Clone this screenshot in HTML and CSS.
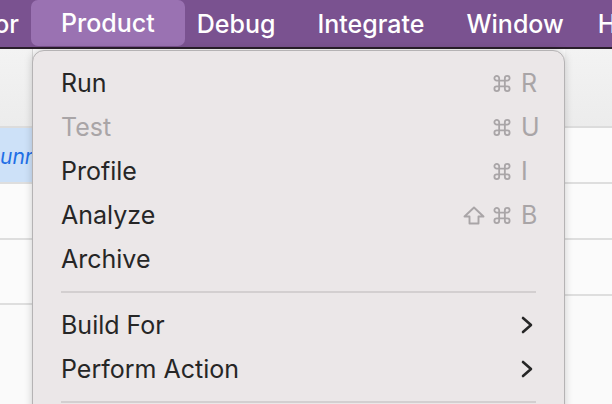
FILE: index.html
```html
<!DOCTYPE html>
<html>
<head>
<meta charset="utf-8">
<link rel="stylesheet" href="styles.css">
</head>
<body>
<div class="menubar">
  <span class="mb-item mb-cut">or</span>
  <span class="mb-item mb-active">Product</span>
  <span class="mb-item">Debug</span>
  <span class="mb-item">Integrate</span>
  <span class="mb-item">Window</span>
  <span class="mb-item mb-last">Help</span>
</div>
<div class="window">
  <div class="pane pane-left">
    <div class="pane-head"></div>
    <div class="row row-sel"><span class="row-text">unning</span></div>
    <div class="row"></div>
    <div class="row row-tall"></div>
  </div>
  <div class="pane pane-mid"></div>
  <div class="pane pane-right">
    <div class="pane-head"></div>
    <div class="row"></div>
    <div class="row"></div>
    <div class="row"></div>
  </div>

  <div class="menu">
    <div class="item"><span class="label">Run</span><span class="keys"><svg class="cmd" width="20" height="19" viewBox="0 0 20 20"><path d="M7 7 V4.5 A2.5 2.5 0 1 0 4.5 7 H15.5 A2.5 2.5 0 1 0 13 4.5 V15.5 A2.5 2.5 0 1 0 15.5 13 H4.5 A2.5 2.5 0 1 0 7 15.5 Z" fill="none" stroke="#a9a5a7" stroke-width="1.9" stroke-linejoin="round"/></svg><span class="key">R</span></span></div>
    <div class="item disabled"><span class="label">Test</span><span class="keys"><svg class="cmd" width="20" height="19" viewBox="0 0 20 20"><path d="M7 7 V4.5 A2.5 2.5 0 1 0 4.5 7 H15.5 A2.5 2.5 0 1 0 13 4.5 V15.5 A2.5 2.5 0 1 0 15.5 13 H4.5 A2.5 2.5 0 1 0 7 15.5 Z" fill="none" stroke="#a9a5a7" stroke-width="1.9" stroke-linejoin="round"/></svg><span class="key">U</span></span></div>
    <div class="item"><span class="label">Profile</span><span class="keys"><svg class="cmd" width="20" height="19" viewBox="0 0 20 20"><path d="M7 7 V4.5 A2.5 2.5 0 1 0 4.5 7 H15.5 A2.5 2.5 0 1 0 13 4.5 V15.5 A2.5 2.5 0 1 0 15.5 13 H4.5 A2.5 2.5 0 1 0 7 15.5 Z" fill="none" stroke="#a9a5a7" stroke-width="1.9" stroke-linejoin="round"/></svg><span class="key">I</span></span></div>
    <div class="item"><span class="label">Analyze</span><span class="keys"><svg class="shift" width="22" height="19" viewBox="0 0 22 19"><path d="M11 1.5 L20.5 10.5 H15.5 V17.5 H6.5 V10.5 H1.5 Z" fill="none" stroke="#a9a5a7" stroke-width="1.9" stroke-linejoin="round"/></svg><svg class="cmd" width="20" height="19" viewBox="0 0 20 20"><path d="M7 7 V4.5 A2.5 2.5 0 1 0 4.5 7 H15.5 A2.5 2.5 0 1 0 13 4.5 V15.5 A2.5 2.5 0 1 0 15.5 13 H4.5 A2.5 2.5 0 1 0 7 15.5 Z" fill="none" stroke="#a9a5a7" stroke-width="1.9" stroke-linejoin="round"/></svg><span class="key">B</span></span></div>
    <div class="item"><span class="label">Archive</span></div>
    <div class="sep"></div>
    <div class="item"><span class="label">Build For</span>
      <svg class="chev" width="12" height="18" viewBox="0 0 12 18"><path d="M2 2 L10 9 L2 16" fill="none" stroke="#262626" stroke-width="2.6" stroke-linecap="round" stroke-linejoin="round"/></svg>
    </div>
    <div class="item"><span class="label">Perform Action</span>
      <svg class="chev" width="12" height="18" viewBox="0 0 12 18"><path d="M2 2 L10 9 L2 16" fill="none" stroke="#262626" stroke-width="2.6" stroke-linecap="round" stroke-linejoin="round"/></svg>
    </div>
    <div class="sep"></div>
    <div class="item"><span class="label">Clean Build Folder</span></div>
  </div>
</div>
</body>
</html>
```
FILE: styles.css
```css
html, body {
  margin: 0;
  padding: 0;
  width: 612px;
  height: 404px;
  overflow: hidden;
  background: #fafafa;
  font-family: Inter, "Noto Sans", "Liberation Sans", sans-serif;
}

.menubar {
  height: 47px;
  background: #7a5290;
  border-bottom: 2px solid #2a1e2b;
  display: flex;
  align-items: stretch;
  white-space: nowrap;
  overflow: hidden;
}

.mb-item {
  display: flex;
  align-items: center;
  padding: 0 21px;
  color: #ffffff;
  font-size: 25px;
  font-weight: 500;
  flex-shrink: 0;
}

.mb-cut {
  width: 40px;
  box-sizing: border-box;
  padding: 0 21px 0 0;
  justify-content: flex-end;
  overflow: hidden;
}

.mb-active {
  margin: 0 -9px 1px;
  padding: 0 30px;
  background: #9a72b2;
  border-radius: 7px;
}

.mb-last {
  margin-left: -8px;
}

.window {
  position: relative;
  display: flex;
  height: 355px;
}

.pane {
  display: flex;
  flex-direction: column;
}

.pane-left {
  width: 32px;
  border-right: 1px solid #d8d8d8;
}

.pane-mid {
  flex: 1;
}

.pane-right {
  width: 47px;
}

.pane-head {
  height: 77px;
  background: linear-gradient(to bottom, #f3f3f3, #ececec);
  border-bottom: 2px solid #dcdcdc;
}

.row {
  height: 54px;
  background: #fbfbfb;
  border-bottom: 2px solid #dedede;
}

.row-tall {
  height: 63px;
}

.row-sel {
  background: #cde1f8;
  overflow: hidden;
  display: flex;
  align-items: center;
}

.row-text {
  font-style: italic;
  font-size: 21px;
  color: #1f6fe6;
  margin-top: 2px;
  white-space: nowrap;
}

.menu {
  position: absolute;
  left: 32px;
  top: 1px;
  width: 533px;
  height: 420px;
  box-sizing: border-box;
  background: #ebe7e8;
  border: 1px solid #b5b3b4;
  border-radius: 12px 12px 0 0;
  box-shadow: 0 0 8px rgba(0, 0, 0, 0.18);
  padding: 10px 0 0;
}

.item {
  height: 44px;
  display: flex;
  align-items: center;
  justify-content: space-between;
  padding: 0 28px;
  font-size: 25px;
  color: #262626;
}

.item.disabled .label {
  color: #a9a5a7;
}

.keys {
  display: flex;
  align-items: center;
  color: #a9a5a7;
}

.cmd {
  margin-right: 9px;
}

.shift {
  margin-right: 7px;
}

.key {
  width: 15px;
  font-size: 25px;
}

.chev {
  margin-right: 3px;
}

.sep {
  height: 22px;
  display: flex;
  align-items: center;
  padding: 0 28px;
}

.sep::after {
  content: "";
  display: block;
  flex: 1;
  height: 2px;
  background: #d3cfd0;
}
```
